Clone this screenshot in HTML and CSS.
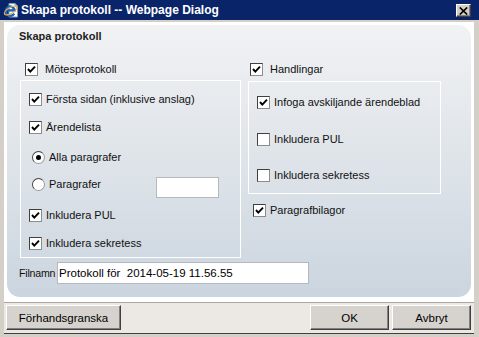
FILE: index.html
```html
<!DOCTYPE html>
<html lang="sv">
<head>
<meta charset="utf-8">
<title>Skapa protokoll -- Webpage Dialog</title>
<link rel="stylesheet" href="styles.css">
</head>
<body>
<div class="window">
  <div class="titlebar">
    <svg class="app-icon" viewBox="0 0 16 16" aria-hidden="true">
      <path d="M6 1.5h6l2.5 2.5v11h-8.5z" fill="#fff" stroke="#8a9bb0" stroke-width="1"/>
      <path d="M12 1.5v2.5h2.5" fill="none" stroke="#8a9bb0" stroke-width="1"/>
      <path d="M11.2 11.6a4.6 4.6 0 1 1 0.6-3.2H4.4" fill="none" stroke="#1a64c8" stroke-width="2.4"/>
      <path d="M4.4 8.4h7.4" stroke="#1a64c8" stroke-width="1.6"/>
      <ellipse cx="7.6" cy="8.6" rx="7" ry="3" transform="rotate(-30 7.6 8.6)" fill="none" stroke="#f2b233" stroke-width="1.2"/>
    </svg>
    <span class="title">Skapa protokoll -- Webpage Dialog</span>
    <span class="close">
      <svg viewBox="0 0 9 8" width="9" height="8" aria-hidden="true"><path d="M0.8 0.5l7.4 7M8.2 0.5l-7.4 7" stroke="#000" stroke-width="1.7"/></svg>
    </span>
  </div>

  <div class="frame">
    <div class="client">
      <div class="panel">
        <div class="heading">Skapa protokoll</div>
        <div class="cols">
          <div class="col col-left">
            <div class="row head-row pad-left-5">
              <span class="cb on"><svg viewBox="0 0 11 11"><polyline points="2,5 4.3,7.6 9,2.6"/></svg></span>
              <span class="lbl gap-wide">Mötesprotokoll</span>
            </div>
            <div class="group group-left">
              <div class="row pad-left-8 mt-7">
                <span class="cb on"><svg viewBox="0 0 11 11"><polyline points="2,5 4.3,7.6 9,2.6"/></svg></span>
                <span class="lbl">Första sidan (inklusive anslag)</span>
              </div>
              <div class="row pad-left-8 mt-6">
                <span class="cb on"><svg viewBox="0 0 11 11"><polyline points="2,5 4.3,7.6 9,2.6"/></svg></span>
                <span class="lbl">Ärendelista</span>
              </div>
              <div class="row pad-left-11 mt-8">
                <span class="rb on"></span>
                <span class="lbl">Alla paragrafer</span>
              </div>
              <div class="row pad-left-11 mt-5">
                <span class="rb"></span>
                <span class="lbl">Paragrafer</span>
                <span class="small-input"></span>
              </div>
              <div class="row pad-left-8 mt-9">
                <span class="cb on"><svg viewBox="0 0 11 11"><polyline points="2,5 4.3,7.6 9,2.6"/></svg></span>
                <span class="lbl">Inkludera PUL</span>
              </div>
              <div class="row pad-left-8 mt-6">
                <span class="cb on"><svg viewBox="0 0 11 11"><polyline points="2,5 4.3,7.6 9,2.6"/></svg></span>
                <span class="lbl">Inkludera sekretess</span>
              </div>
            </div>
          </div>

          <div class="col col-right">
            <div class="row head-row pad-left-2">
              <span class="cb on"><svg viewBox="0 0 11 11"><polyline points="2,5 4.3,7.6 9,2.6"/></svg></span>
              <span class="lbl gap-wide">Handlingar</span>
            </div>
            <div class="group group-right">
              <div class="row pad-left-8 mt-9">
                <span class="cb on"><svg viewBox="0 0 11 11"><polyline points="2,5 4.3,7.6 9,2.6"/></svg></span>
                <span class="lbl">Infoga avskiljande ärendeblad</span>
              </div>
              <div class="row pad-left-8 mt-15">
                <span class="cb"></span>
                <span class="lbl">Inkludera PUL</span>
              </div>
              <div class="row pad-left-8 mt-14">
                <span class="cb"></span>
                <span class="lbl">Inkludera sekretess</span>
              </div>
            </div>
            <div class="row pad-left-5 mt-5">
              <span class="cb on"><svg viewBox="0 0 11 11"><polyline points="2,5 4.3,7.6 9,2.6"/></svg></span>
              <span class="lbl">Paragrafbilagor</span>
            </div>
          </div>
        </div>

        <div class="file-row">
          <span class="file-label">Filnamn</span>
          <span class="file-input">Protokoll för&nbsp; 2014-05-19 11.56.55</span>
        </div>
      </div>
    </div>

    <div class="bar">
      <span class="btn btn-preview">Förhandsgranska</span>
      <span class="btn btn-ok">OK</span>
      <span class="btn btn-cancel">Avbryt</span>
    </div>
  </div>
</div>
</body>
</html>
```

FILE: styles.css
```css
* { box-sizing: border-box; }

body {
  margin: 0;
  font-family: "Liberation Sans", Arial, sans-serif;
  font-size: 11px;
  color: #111;
}

.window {
  width: 479px;
  height: 337px;
  background: #d4d0c8;
  display: flex;
  flex-direction: column;
  overflow: hidden;
}

.titlebar {
  height: 20px;
  flex: none;
  background: #0a246a;
  display: flex;
  align-items: center;
  padding: 0 8px 0 3px;
}

.app-icon {
  width: 16px;
  height: 16px;
  margin-right: 2px;
  flex: none;
}

.title {
  flex: 1;
  color: #fff;
  font-weight: bold;
  font-size: 12px;
}

.close {
  width: 15px;
  height: 13px;
  margin-top: 1px;
  background: #d4d0c8;
  border: 1px solid;
  border-color: #fff #404040 #404040 #fff;
  box-shadow: inset -1px -1px #808080;
  display: flex;
  align-items: center;
  justify-content: center;
}

.frame {
  flex: 1;
  display: flex;
  flex-direction: column;
  margin: 2px 5px 3px 4px;
}

.client {
  background: #fff;
  padding: 3px 3px 5px 3px;
}

.panel {
  height: 272px;
  border-radius: 13px;
  background: linear-gradient(#f1f2f4, #e4e8ec 35%, #cbd5df);
  padding: 3px 0 0 12px;
}

.heading {
  height: 16px;
  line-height: 16px;
  font-weight: bold;
  font-size: 11px;
  color: #1e1e1e;
}

.cols {
  display: flex;
  gap: 7px;
  margin-left: 1px;
}

.col-left { width: 221px; }
.col-right { width: 193px; }

.group {
  border: 1px solid #fff;
}

.group-left {
  height: 178px;
}

.group-right {
  height: 113px;
  margin-top: 1px;
}

.row {
  display: flex;
  align-items: center;
  height: 22px;
}

.head-row { margin-top: 14px; }

.pad-left-2 { padding-left: 2px; }
.pad-left-5 { padding-left: 5px; }
.pad-left-8 { padding-left: 8px; }
.pad-left-11 { padding-left: 11px; }

.mt-5 { margin-top: 5px; }
.mt-6 { margin-top: 6px; }
.mt-7 { margin-top: 7px; }
.mt-8 { margin-top: 8px; }
.mt-9 { margin-top: 9px; }
.mt-14 { margin-top: 14px; }
.mt-15 { margin-top: 15px; }

.cb {
  width: 13px;
  height: 13px;
  flex: none;
  background: #fff;
  border: 1px solid;
  border-color: #404040 #8c8c8c #8c8c8c #404040;
  display: flex;
}

.cb svg {
  width: 11px;
  height: 11px;
}

.cb polyline {
  fill: none;
  stroke: #000;
  stroke-width: 1.9;
}

.rb {
  width: 13px;
  height: 13px;
  flex: none;
  border-radius: 50%;
  background: #fff;
  border: 1px solid;
  border-color: #404040 #9a9a9a #9a9a9a #404040;
  display: flex;
  align-items: center;
  justify-content: center;
}

.rb.on::after {
  content: "";
  width: 5px;
  height: 5px;
  border-radius: 50%;
  background: #000;
}

.lbl {
  margin-left: 4px;
  white-space: nowrap;
}

.lbl.gap-wide { margin-left: 7px; }

.small-input {
  width: 63px;
  height: 21px;
  margin-left: auto;
  margin-right: 21px;
  align-self: flex-start;
  margin-top: 4px;
  background: #fff;
  border: 1px solid #b5b8bc;
}

.file-row {
  display: flex;
  align-items: center;
  margin-top: 4px;
  height: 22px;
}

.file-label {
  width: 38px;
  font-size: 10.6px;
  letter-spacing: -0.2px;
  white-space: nowrap;
}

.file-input {
  width: 252px;
  height: 22px;
  background: #fff;
  border: 1px solid #b5b8bc;
  padding-left: 1px;
  font-size: 11.5px;
  line-height: 20px;
  color: #000;
  white-space: nowrap;
}

.bar {
  flex: 1;
  background: #ece9e4;
  border-top: 1px solid #a9a79f;
  border-bottom: 1px solid #404040;
  display: flex;
  align-items: flex-start;
  padding: 2px 3px 0 2px;
}

.btn {
  height: 25px;
  display: flex;
  align-items: center;
  justify-content: center;
  background: #d6d3ce;
  border: 1px solid;
  border-color: #fff #404040 #404040 #fff;
  box-shadow: inset -1px -1px #808080;
  color: #000;
  font-size: 11.5px;
}

.btn-preview { width: 115px; }
.btn-ok { width: 79px; margin-left: auto; }
.btn-cancel { width: 79px; margin-left: 3px; }
```
